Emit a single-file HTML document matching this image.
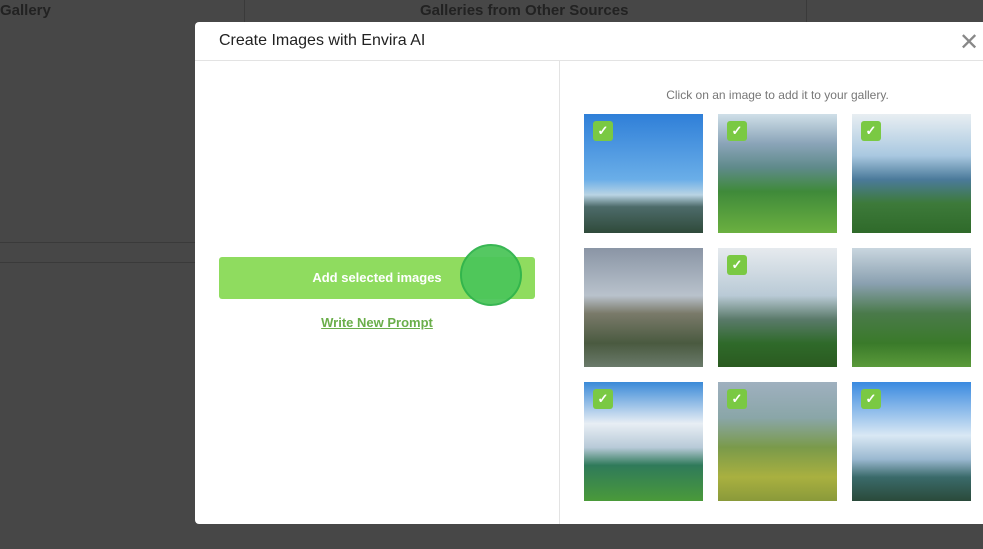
<!DOCTYPE html>
<html><head><meta charset="utf-8"><style>
body{margin:0;width:983px;height:549px;overflow:hidden;background:#474747;font-family:"Liberation Sans",sans-serif;position:relative}
.bgt{position:absolute;top:2px;color:#222;font-size:15px;font-weight:bold}
.vl{position:absolute;top:0;width:1px;height:22px;background:#3a3a3a}
.modal{position:absolute;left:195px;top:22px;width:800px;height:502px;background:#fff;border-radius:4px}
.hdr{height:38px;border-bottom:1px solid #e3e3e3;font-size:16px;color:#222;padding-left:24px;line-height:38px}
.x{position:absolute;left:764px;top:9px;font-size:24px;color:#888;line-height:24px}
.div{position:absolute;left:364px;top:39px;width:1px;height:463px;background:#e3e3e3}
.btn{position:absolute;left:24px;top:235px;width:316px;height:42px;background:#8fdc5f;border-radius:3px;color:#fff;font-weight:bold;font-size:13px;text-align:center;line-height:42px}
.circ{position:absolute;left:265px;top:222px;width:58px;height:58px;border-radius:50%;background:#4cc65a;border:2px solid #2fb34b;opacity:.95}
.link{position:absolute;left:0;width:364px;top:293px;text-align:center;font-size:13px;color:#6aae4a;text-decoration:underline;font-weight:bold}
.cap{position:absolute;left:365px;width:435px;top:66px;text-align:center;font-size:12px;color:#777}
.img{position:absolute;width:119px;height:119px}
.ck{position:absolute;left:9px;top:7px;width:20px;height:20px;background:#7ac943;border-radius:3px;color:#fff;font-size:13px;text-align:center;line-height:20px;font-weight:bold}
</style></head><body>
<div class="bgt" style="left:0">Gallery</div>
<div class="bgt" style="left:420px">Galleries from Other Sources</div>
<div class="vl" style="left:244px"></div><div class="vl" style="left:806px"></div>
<div style="position:absolute;left:0;top:242px;width:195px;height:1px;background:#3a3a3a"></div>
<div style="position:absolute;left:0;top:262px;width:195px;height:1px;background:#3a3a3a"></div>
<div class="modal">
<div class="hdr">Create Images with Envira AI</div>
<div class="x">✕</div>
<div class="div"></div>
<div class="btn">Add selected images</div>
<div class="circ"></div>
<div class="link">Write New Prompt</div>
<div class="cap">Click on an image to add it to your gallery.</div>
<div class="img" style="left:389px;top:92px;background:linear-gradient(#2f7fd8 0%,#6aaee8 55%,#b9d4e4 68%,#4d6b6a 78%,#2f4a3a 100%)"><div class="ck">✓</div></div>
<div class="img" style="left:523px;top:92px;background:linear-gradient(#cfdfe8 0%,#8aa4b8 25%,#5f8a8a 45%,#3f8a3a 65%,#6bb040 100%)"><div class="ck">✓</div></div>
<div class="img" style="left:657px;top:92px;background:linear-gradient(#e8eef2 0%,#a9c8e0 35%,#4b7a9a 55%,#3d7a3a 75%,#2f6a2a 100%)"><div class="ck">✓</div></div>
<div class="img" style="left:389px;top:226px;background:linear-gradient(#8a95a5 0%,#b9c2cc 40%,#7a7a6a 55%,#4a5a40 80%,#6a7a6a 100%)"></div>
<div class="img" style="left:523px;top:226px;background:linear-gradient(#e6eaee 0%,#b9cad6 40%,#5a7a6a 60%,#2f6a2a 80%,#2a5a20 100%)"><div class="ck">✓</div></div>
<div class="img" style="left:657px;top:226px;background:linear-gradient(#c9d6df 0%,#8aa0b0 30%,#4a7a4a 55%,#3a7a2a 80%,#5a9a3a 100%)"></div>
<div class="img" style="left:389px;top:360px;background:linear-gradient(#3a8ad8 0%,#e8eef4 35%,#b8cad8 55%,#2f7a5a 70%,#4a9a3a 100%)"><div class="ck">✓</div></div>
<div class="img" style="left:523px;top:360px;background:linear-gradient(#9fb0bf 0%,#8aa6a8 30%,#7a9a4a 55%,#a9b040 80%,#8a9a3a 100%)"><div class="ck">✓</div></div>
<div class="img" style="left:657px;top:360px;background:linear-gradient(#3a8ae0 0%,#d9e8f4 45%,#9ab8d0 65%,#3a6a6a 80%,#2a4a3a 100%)"><div class="ck">✓</div></div>
</div>
</body></html>
